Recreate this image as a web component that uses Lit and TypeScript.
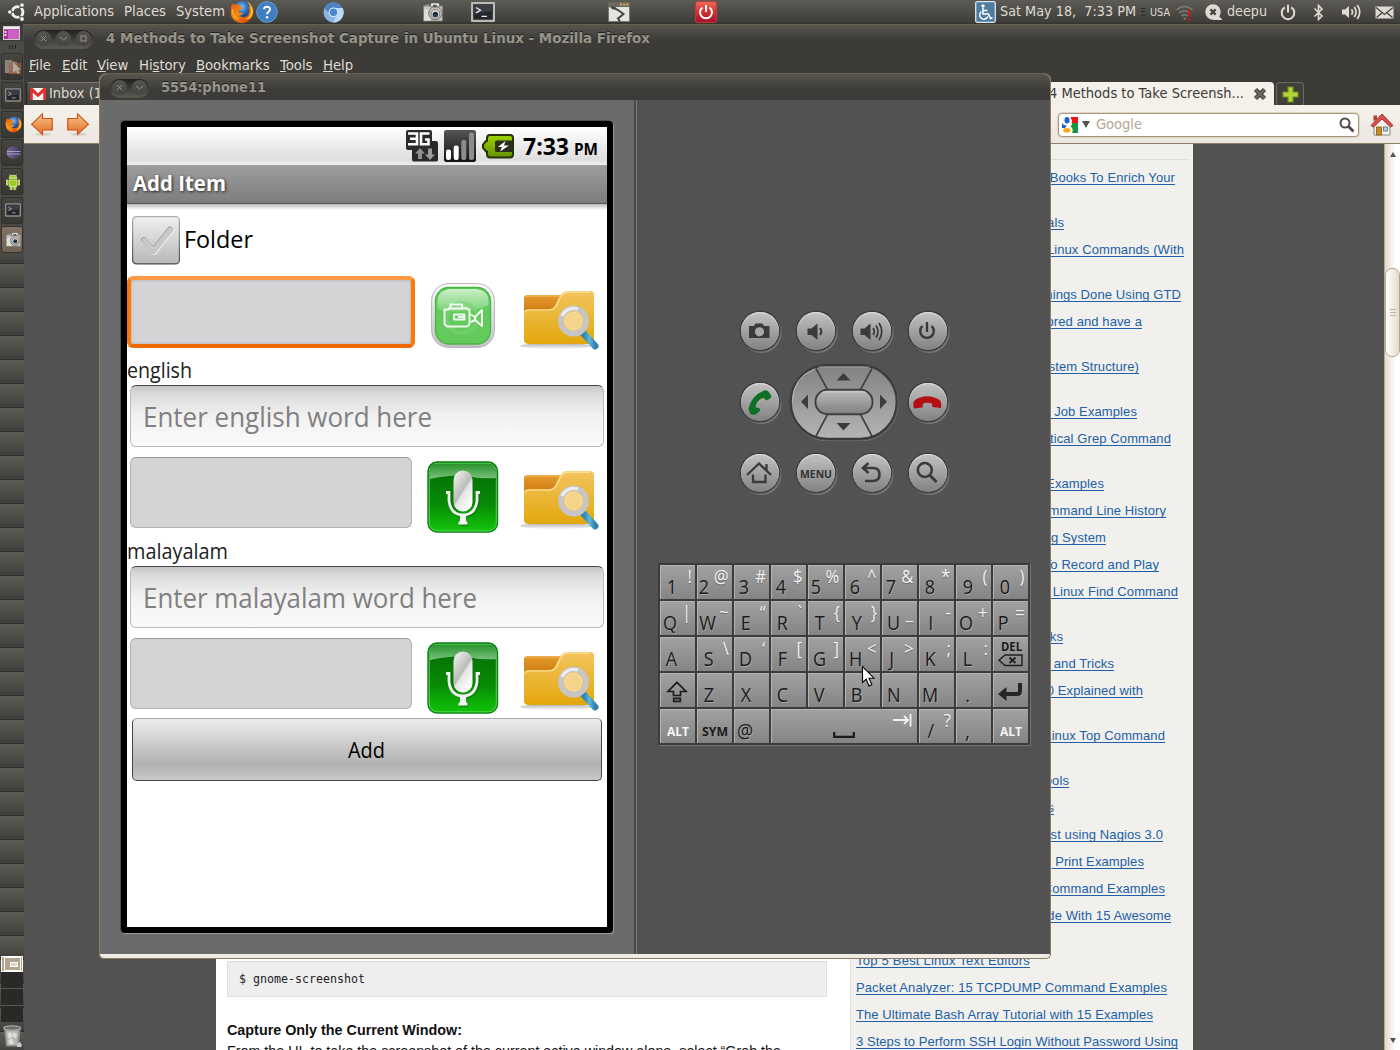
import { LitElement, html, svg, css, nothing } from "lit";
import type { TemplateResult } from "lit";
import { customElement, property } from "lit/decorators.js";

/* ---------- text that is condensed or spaced to a given width ---------- */
@customElement("fit-text")
class FitText extends LitElement {
  @property() text = "";
  @property({ type: Number }) w = 0;
  @property({ reflect: true }) mode = "scale";
  static styles = css`
    :host { display: inline-block; white-space: pre; text-align: left; flex: none; }
    .t { display: inline-block; transform-origin: 0 50%; }
    :host([mode="link"]) .t { text-decoration: underline; text-decoration-thickness: 1px; text-underline-offset: 2px; text-decoration-skip-ink: none; }
  `;
  render() {
    return html`<span class="t">${this.text}</span>`;
  }
  updated() {
    const t = this.renderRoot.querySelector(".t") as HTMLElement;
    if (!this.w) return;
    t.style.letterSpacing = this.mode === "link" ? "0px" : "";
    const natural = t.offsetWidth ? t.getBoundingClientRect().width : 0;
    if (!natural) return;
    this.style.width = this.w + "px";
    if (this.mode === "link") {
      t.style.letterSpacing = (this.w - natural) / this.text.length + "px";
    } else {
      t.style.transform = `scaleX(${this.w / natural})`;
    }
  }
}
const fit = (text: string, w: number, mode = "scale") =>
  html`<fit-text .text=${text} .w=${w} .mode=${mode}></fit-text>`;

/* ---------- icons ---------- */
const icon = (w: number, h: number, body: unknown, vb = `0 0 ${w} ${h}`) =>
  html`<svg width=${w} height=${h} viewBox=${vb} fill="none" style="display:block;flex:none">${body}</svg>`;

const ubuntu = icon(18, 18, svg`
  <circle cx="9.6" cy="9" r="5.3" stroke="#f2f0ea" stroke-width="3"/>
  <path d="M9.6 9L2 9M9.6 9L14 1.5M9.6 9L14 16.5" stroke="#4c4b47" stroke-width="1.4"/>
  <circle cx="9.6" cy="9" r="3.6" fill="#4c4b47"/>
  <circle cx="1.9" cy="9" r="2.5" fill="#4c4b47"/><circle cx="13.9" cy="2.2" r="2.7" fill="#4c4b47"/><circle cx="13.9" cy="15.9" r="2.7" fill="#4c4b47"/>
  <circle cx="1.8" cy="9" r="1.8" fill="#f2f0ea"/><circle cx="14" cy="2.1" r="1.9" fill="#f2f0ea"/><circle cx="14" cy="16" r="1.9" fill="#f2f0ea"/>`);

const firefox = (s: number) => icon(s, s, svg`
  <defs>
    <radialGradient id="fb" cx=".45" cy=".3" r=".7"><stop offset="0" stop-color="#7fc4ee"/><stop offset=".5" stop-color="#2263b4"/><stop offset="1" stop-color="#0b1f5e"/></radialGradient>
    <linearGradient id="fo" x1="0" y1="0" x2=".8" y2="1"><stop offset="0" stop-color="#e2520c"/><stop offset=".5" stop-color="#f58a17"/><stop offset="1" stop-color="#d43f06"/></linearGradient>
  </defs>
  <circle cx="12.5" cy="11" r="10" fill="url(#fb)"/>
  <path d="M2.5 3C3.500 4 4 4.500 5 4.600C7 4 8.500 4.300 9.500 5.500L12 7.500C12.500 9 11 9.500 9.500 10C9 11.500 8.500 11.500 9 12.500C10 13 11.500 12.500 13 13C13 14.500 11 15.800 9.500 15.500C12 18 16 17.500 18 15C20 12 19.500 8 18 6L20.500 7.500C20 5 18.500 3 16.500 1.500C21 3 23.800 7.500 23.400 12.500C22.500 19 17.500 23.200 12 23.200C5.500 23 1 18.500 .8 12.500C.6 9 1.200 6 2.500 3Z" fill="url(#fo)"/>
  <path d="M20.500 7.500C22 12 20 18 14.500 19.500C20 20 23 16 22.900 11.500C22.600 7 20 3.500 16.500 1.500C18.500 3 20 5 20.500 7.500Z" fill="#fbc92e"/>
  <path d="M2.500 9C2 13 4.500 18 9 19.500" stroke="#fbb429" stroke-width="1.300"/>`, "0 0 24 24");

const help = icon(22, 22, svg`
  <circle cx="11" cy="11" r="10.300" fill="#3f7fc0" stroke="#6aa0d4" stroke-width="1"/>
  <path d="M8 8.300C8.100 4.900 14 4.800 14 8.300C14 10.800 11.100 10.600 11.100 13.300" stroke="#fff" stroke-width="1.900"/>
  <circle cx="11.100" cy="16.200" r="1.200" fill="#fff"/>`);

const chromium = icon(21, 21, svg`
  <circle cx="10.500" cy="10.500" r="10" fill="#8ab4e4"/>
  <path d="M1.500 6A10 10 0 0 1 19.600 6H10.500L7 12Z" fill="#4f83bf"/>
  <path d="M19.600 6A10 10 0 0 1 10 20.500L14.500 12.500L13 6Z" fill="#bcd9f5"/>
  <circle cx="10.500" cy="10.300" r="4.900" fill="#dcebfa"/><circle cx="10.500" cy="10.300" r="3.800" fill="#4d86cc"/>`);

const camera = (w: number, h: number) => icon(w, h, svg`
  <path d="M1 4H21V20H1Z" fill="#c9c9c6" stroke="#73726e" stroke-width=".8"/>
  <path d="M3 2.500H7V4H3ZM9 1H17L18.500 5H8Z" fill="#e7e7e5" stroke="#5f5e5a" stroke-width=".7"/>
  <path d="M1.500 8H8V19.500H1.500Z" fill="#dedddb"/><circle cx="13.500" cy="11.800" r="7" fill="#c0bfbb" stroke="#72716d"/>
  <circle cx="13.500" cy="12.500" r="4.600" fill="#d9d9d6" stroke="#777"/><circle cx="13.500" cy="13" r="2.800" fill="#272b33"/>
  <rect x="12" y="13.500" width="3" height="2" fill="#1b3f8c"/><rect x="11" y="3" width="4" height="2.500" fill="#555"/>`, "0 0 22 21");

const terminal = (w: number, h: number, dim = false) => icon(w, h, svg`
  <rect x="1" y="1" width="22" height="18" rx="1" fill="#23262a" stroke=${dim ? "#8d8c89" : "#b9b9b5"} stroke-width="2.400"/>
  <path d="M2.200 2.200H21.800V9L2.200 12Z" fill="#3a3e44"/>
  <path d="M5 5.500L9.500 8.200L5 10.900M10.500 14.300H16" stroke=${dim ? "#b5b5b2" : "#e8e8e6"} stroke-width="1.300"/>`, "0 0 24 20");

const torn = icon(22, 20, svg`
  <rect x=".5" y=".5" width="21" height="19" fill="#e4e4e2" stroke="#77766f"/><rect x="0" y="0" width="22" height="5" fill="#6b6962"/>
  <path d="M12 1.500h2v2h-2zM15.200 1.500h2v2h-2zM18.300 1.500h2v2h-2z" fill="#e0ad45"/>
  <path d="M1 4.500H9L5 8Z" fill="#6b6962"/><path d="M4 5L10 8L15.500 12L10 16.500L12 19.500" stroke="#45433e" stroke-width="2"/>`);

const powerRed = icon(22, 22, svg`
  <defs><linearGradient id="pr" x1="0" y1="0" x2="0" y2="1"><stop offset="0" stop-color="#ec6a5c"/><stop offset=".5" stop-color="#d8302f"/><stop offset="1" stop-color="#a1102f"/></linearGradient></defs>
  <rect x=".5" y=".5" width="21" height="21" rx="2" fill="url(#pr)" stroke="#c23a3a"/>
  <path d="M7.500 6.500A6 6 0 1 0 14.500 6.500M11 4V11" stroke="#fff" stroke-width="2"/>`);

const access = icon(21, 22, svg`
  <rect x=".7" y=".7" width="19.600" height="20.600" rx="1.500" fill="#4f7ba3" stroke="#dfe4e8" stroke-width="1.300"/>
  <circle cx="8" cy="5" r="1.700" fill="#fff"/><path d="M8 7V13H13.500L15.500 17.500L17.500 16.800M8 9.500H12.500" stroke="#fff" stroke-width="1.500"/>
  <path d="M6.500 10.500A4.200 4.200 0 1 0 12.800 15.500" stroke="#fff" stroke-width="1.500"/>`);

const wifi = icon(18, 20, svg`
  <path d="M.8 8C5 3.500 12.500 3.500 16.500 8M3 11.200C6 8 11 8 14 11.200M5.500 14.200C7 12.200 10 12.200 11.500 14.200" stroke="#7b7972" stroke-width="1.700"/>
  <path d="M6.800 15.800L8.700 18.300L10.500 15.800Z" fill="#7b7972"/><path d="M12.300 7.500h2v7.500h-2zM12.300 16.700h2v2.300h-2z" fill="#e01212"/>`);

const bubble = icon(18, 17, svg`
  <circle cx="8" cy="8" r="7.700" fill="#dfdbd2"/><path d="M10 13.500L13 11L17.500 16H8Z" fill="#dfdbd2"/>
  <path d="M5.400 5.400L10.600 10.600M10.600 5.400L5.400 10.600" stroke="#45443f" stroke-width="2.200"/>`);

const powerPanel = icon(16, 17, svg`<path d="M4.800 3.400A6.300 6.300 0 1 0 11.200 3.400M8 .8V8.500" stroke="#dfdbd2" stroke-width="2"/>`);
const bluetooth = icon(11, 17, svg`<path d="M1.500 4.500L9 12L5.500 15.500V1.500L9 5L1.500 12.500" stroke="#dfdbd2" stroke-width="1.600"/>`);
const speaker = icon(22, 18, svg`
  <path d="M1 6.500H4L8 3V15L4 11.500H1Z" fill="#dfdbd2"/>
  <path d="M10.500 6.200Q12.500 9 10.500 11.800M13.300 4Q16.800 9 13.300 14M16.300 2Q21.200 9 16.300 16" stroke="#dfdbd2" stroke-width="1.700"/>`);
const mail = icon(19, 13, svg`
  <rect x=".5" y=".5" width="18" height="12" fill="#dfdbd2"/><path d="M1 1.500L9.500 8.500L18 1.500M1.500 11.500L7 6.800M17.500 11.500L12 6.800" stroke="#45443f" stroke-width="1.300"/>`);

/* dock */
const purple = icon(17, 14, svg`
  <rect x=".5" y=".5" width="16" height="13" fill="#a8309b" stroke="#cfc9c9"/><rect x="1" y="1" width="15" height="2.200" fill="#f0eeea"/>
  <path d="M1.500 5h2v2h-2zM1.500 8h2v2h-2z" fill="#f3d6f0"/><rect x="5" y="4" width="11" height="9" fill="#cc5fc3"/>`);
const files = icon(18, 16, svg`
  <path d="M1 1H8V3H13V14H1Z" fill="#8a8782"/><path d="M5 4H17V15H5Z" fill="#9a5c3e" opacity=".8"/><path d="M3 2H11V12H3Z" fill="#8f7566" opacity=".6"/>
  <path d="M9 3V14L12 11.500L13.500 15L15.500 14L14 10.800H17Z" fill="#adaaa4"/>`);
const eclipse = icon(15, 13, svg`
  <defs><linearGradient id="ec"><stop offset="0" stop-color="#7b6a9b"/><stop offset="1" stop-color="#39355e"/></linearGradient></defs>
  <ellipse cx="7.500" cy="6.500" rx="7" ry="6.200" fill="url(#ec)"/><path d="M1 5.500H14.500M1 8H14.500" stroke="#b9b2cc" stroke-width=".8"/>`);
const android = icon(14, 16, svg`
  <path d="M3 5A4 4 0 0 1 11 5ZM3 6H11V12.500H3ZM.3 6H2V11H.3ZM12 6H13.700V11H12ZM4.200 12H6.200V15.500H4.200ZM7.800 12H9.800V15.500H7.800Z" fill="#9ccb20" stroke="#dff0a8" stroke-width=".7"/>
  <path d="M4.500 2L3.500 .5M9.500 2L10.500 .5" stroke="#cfe88a"/><path d="M5 3.200h1v1h-1zM8 3.200h1v1h-1z" fill="#fff"/>`);
const trash = icon(20, 23, svg`
  <path d="M2 3L4 21.500H17L18.500 3Z" fill="#8f908e"/><path d="M4 6L5.500 20H15L16.500 6Z" fill="#b5b7b3"/>
  <ellipse cx="10.200" cy="3" rx="8.800" ry="2.200" fill="#6d6e6c" stroke="#b9bab8"/>
  <path d="M5 9L9 7L11 11L7 14ZM11 7L15 9L14 13L11 12ZM6 16L10 13L12 18L8 20Z" fill="#dcdedb"/><path d="M15 19L18 17L20 20L19 22H15Z" fill="#c9cbc8"/>`);

/* firefox */
const gmail = icon(16, 12, svg`
  <rect width="16" height="12" fill="#dd3030"/><path d="M2.800 12V4.800L8 9.300L13.200 4.800V12Z" fill="#fff"/><path d="M2.600 0H13.400L8 5.300Z" fill="#fff"/>
  <path d="M3.500 11.500L6.500 8.500M12.500 11.500L9.500 8.500" stroke="#e9a0a0" stroke-width=".7"/>`);
const arrow = (flip: boolean) => icon(24, 26, svg`
  <defs><linearGradient id="ar" x1="0" y1="0" x2="0" y2="1"><stop offset="0" stop-color="#f6c888"/><stop offset="1" stop-color="#e26a23"/></linearGradient></defs>
  <ellipse cx="13" cy="22.300" rx="8" ry="1.600" fill="#d8d1c8"/>
  <path transform=${flip ? "translate(24 0) scale(-1 1)" : ""} d="M1.500 12.300L12.500 1.800V6.500H22.300V18H12.500V22.600Z" fill="url(#ar)" stroke="#c9501c" stroke-width="1.100"/>`);
const tabX = icon(14, 14, svg`<path d="M2.500 2.500L11.500 11.500M11.500 2.500L2.500 11.500" stroke="#3f3e3a" stroke-width="4.400"/><path d="M2.500 2.500L11.500 11.500M11.500 2.500L2.500 11.500" stroke="#6d6b65" stroke-width="2.400"/>`);
const plus = icon(17, 17, svg`<path d="M6 1H11V6H16V11H11V16H6V11H1V6H6Z" fill="#b4d43c" stroke="#6e9418" stroke-width="1.200"/>`);
const google = icon(16, 16, svg`
  <rect width="16" height="16" fill="#fff"/><path d="M9 0H16V6H9.500Q11 3 8.500 1.500Z" fill="#f4130f"/><path d="M10 6H16V16H10Q12 12 8.500 9.500Q10.500 8 10 6Z" fill="#16963c"/>
  <ellipse cx="5" cy="3.300" rx="2.500" ry="3.200" fill="#1e5bd6"/><path d="M0 6Q2 9 5 8.500L3 11H0Z" fill="#1e5bd6"/><ellipse cx="4.800" cy="13.300" rx="3.500" ry="2.300" fill="#f6a80c"/>`);
const magnify = icon(16, 16, svg`<circle cx="6" cy="6" r="4.500" stroke="#4b4a48" stroke-width="2"/><path d="M9.300 9.300L14.500 14.500" stroke="#4b4a48" stroke-width="2.800"/>`);
const home = icon(24, 25, svg`
  <path d="M4 12V23H20V12L12 5Z" fill="#f3f1ee" stroke="#8c8984"/><path d="M3.500 9V3.500H7V7Z" fill="#b9352f"/>
  <path d="M1 13.500L12 2L23 13.500L20.500 15L12 7L3.500 15Z" fill="#d65050" stroke="#9c2727" stroke-width=".9"/>
  <rect x="6.500" y="15" width="5" height="8" fill="#c58a22" stroke="#8a5c10" stroke-width=".8"/><rect x="13.500" y="15" width="4" height="4" fill="#b7cfe6" stroke="#666" stroke-width=".8"/>`);

/* phone */
const threeG = icon(32, 32, svg`
  <path d="M2 0H24Q26 0 26 2V11H30Q32 11 32 13V30Q32 31.500 30 31.500H8Q6 31.500 6 30V20H2Q0 20 0 18V2Q0 0 2 0Z" fill="#2a2a2a"/>
  <path d="M2 3.500H11V14.200H2M4 8.800H11M23.500 3.500H15V14.200H22.500V9.500H19" stroke="#fff" stroke-width="2.600"/>
  <path d="M14 18L19 23.500H16V29H12V23.500H9Z" fill="#8f8f8f"/><path d="M24 30L29 24.500H26V18.500H22V24.500H19Z" fill="#9a9a9a"/>`);
const signal = icon(32, 32, svg`
  <defs><linearGradient id="sg" x1="0" y1="0" x2="0" y2="1"><stop offset="0" stop-color="#555"/><stop offset="1" stop-color="#111"/></linearGradient></defs>
  <rect width="32" height="32" rx="2.500" fill="url(#sg)"/>
  <rect x="2" y="19.500" width="5" height="10.500" rx="2" fill="#fff"/><rect x="9.700" y="15.500" width="5" height="14.500" rx="2" fill="#fff"/>
  <rect x="17.300" y="10" width="5" height="20" rx="2" fill="#8c8c8c"/><rect x="25" y="2.500" width="5" height="27.500" rx="2" fill="#8c8c8c"/>`);
const battery = icon(33, 25, svg`
  <defs><linearGradient id="bt" x1="0" y1="0" x2="0" y2="1"><stop offset="0" stop-color="#9bd400"/><stop offset="1" stop-color="#659200"/></linearGradient></defs>
  <path d="M8 1H28Q31 1 31 4V20Q31 23.500 28 23.500H8Q5 23.500 5 20V17.500H4L1 14V10.500L4 7H5V4Q5 1 8 1Z" fill="url(#bt)" stroke="#26300c" stroke-width="2"/>
  <path d="M13 8Q13 6.500 15 6.500H30V18H15Q13 18 13 16.500Z" fill="#2a2f20"/><path d="M23.500 7L16 13H20L18 17.500L27 11.500H22Z" fill="#fff"/>`);
const checkbox = icon(48, 49, svg`
  <defs><linearGradient id="cb" x1="0" y1="0" x2="0" y2="1"><stop offset="0" stop-color="#efefef"/><stop offset="1" stop-color="#b8b8b8"/></linearGradient>
  <linearGradient id="cs" x1="0" y1="0" x2="0" y2="1"><stop offset="0" stop-color="#b0b0b0"/><stop offset="1" stop-color="#4a4a4a"/></linearGradient></defs>
  <rect x=".6" y=".6" width="46.800" height="47.300" rx="4" fill="url(#cb)" stroke="url(#cs)" stroke-width="1.200"/>
  <path d="M12 24L21.500 34.500L38 13.500" stroke="#ececec" stroke-width="6.500" stroke-linecap="round" stroke-linejoin="round" transform="translate(.8 1)"/>
  <path d="M12 24L21.500 34.500L38 13.500" stroke="#a4a4a4" stroke-width="6" stroke-linecap="round" stroke-linejoin="round"/>
  <path d="M12 24L21.500 34.500L38 13.500" stroke="#c8c8c8" stroke-width="5" stroke-linecap="round" stroke-linejoin="round" transform="translate(.3 .4)"/>`);
const video = icon(64, 65, svg`
  <defs><linearGradient id="vf" x1="0" y1="0" x2="0" y2="1"><stop offset="0" stop-color="#fbfbfb"/><stop offset="1" stop-color="#c4bfc4"/></linearGradient>
  <linearGradient id="vg" x1="0" y1="0" x2="0" y2="1"><stop offset="0" stop-color="#c9efc6"/><stop offset="1" stop-color="#7bd275"/></linearGradient></defs>
  <rect x=".6" y=".6" width="62.800" height="63.800" rx="17" fill="url(#vf)" stroke="#b9b5b9"/>
  <rect x="4.500" y="4.500" width="55" height="56.500" rx="13.500" fill="#62cb5c" stroke="#45b845" stroke-width="1.300"/>
  <path d="M6.500 26V18Q7 7 19 6H45Q57 7 57.500 18V22Q48 27 38 27Q22 31 6.500 26Z" fill="url(#vg)"/>
  <circle cx="31" cy="35" r="15" stroke="#7ad075" stroke-width="4" opacity=".6"/>
  <path d="M13.500 26.500H17L19.500 25.200V21.500H31V25.200H35L38.500 27V41.500L36 43.500H16L13.500 41ZM17 25.500H36M40 31.500L44 34L51 27V43L44 37L40 39M44 34V37M23 31.500H33.500V36.500H23ZM27 34H33" stroke="#f1faf0" stroke-width="2" stroke-linejoin="round"/>`);
const mic = icon(72, 73, svg`
  <defs><linearGradient id="mg" x1="0" y1="0" x2="0" y2="1"><stop offset="0" stop-color="#066a06"/><stop offset=".6" stop-color="#078a05"/><stop offset="1" stop-color="#12c50a"/></linearGradient>
  <linearGradient id="mh" x1="0" y1="0" x2="0" y2="1"><stop offset="0" stop-color="#2a942e"/><stop offset="1" stop-color="#7ac27d"/></linearGradient>
  <linearGradient id="mw" x1="0" y1="0" x2=".7" y2="1"><stop offset="0" stop-color="#f8f8f8"/><stop offset=".55" stop-color="#b9bdb9"/><stop offset=".62" stop-color="#e5e5e5"/><stop offset="1" stop-color="#fff"/></linearGradient></defs>
  <rect x="1" y="1" width="69.500" height="70" rx="9" fill="url(#mg)" stroke="#0d8014" stroke-width="1.400"/>
  <rect x="2.300" y="2.300" width="67" height="67.500" rx="8" stroke="#5fdd5a" stroke-width=".9"/>
  <path d="M3 18V10Q3 3 10 3H62Q69 3 69 10V17Q52 18 36 14.500Q20 14 3 18Z" fill="url(#mh)"/>
  <rect x="26.500" y="9.500" width="19" height="41" rx="9.500" fill="url(#mw)"/>
  <path d="M19.500 30.500H22.500V39Q24 53 36 53Q48 53 49.500 39V30.500H52.500M36 53V62M31.500 61.500H40.500" stroke="#0a5a0a" stroke-width="4.500" opacity=".4" transform="translate(1 1.500)"/>
  <path d="M19 31.500H22V40Q24 54 36 54Q48 54 50 40V31.500H53" stroke="#eef0ee" stroke-width="2.800"/>
  <path d="M33 54H39V59Q39 61 40.500 61V63.500H31.500V61Q33 61 33 59Z" fill="#f4f4f4"/>`);
const folder = icon(80, 62, svg`
  <defs><linearGradient id="ff" x1="0" y1="0" x2="0" y2="1"><stop offset="0" stop-color="#f3c45e"/><stop offset="1" stop-color="#e3a70c"/></linearGradient>
  <linearGradient id="fk" x1="0" y1="0" x2="0" y2="1"><stop offset="0" stop-color="#e69b2c"/><stop offset="1" stop-color="#c46c06"/></linearGradient>
  <linearGradient id="fh" x1="0" y1="0" x2="1" y2="0"><stop offset="0" stop-color="#2d86ad"/><stop offset=".5" stop-color="#5fb4d8"/><stop offset="1" stop-color="#2f83ae"/></linearGradient>
  <linearGradient id="fs" x1="0" y1="0" x2="0" y2="1"><stop offset="0" stop-color="#999" stop-opacity=".9"/><stop offset="1" stop-color="#ccc" stop-opacity=".2"/></linearGradient></defs>
  <ellipse cx="36" cy="56" rx="36" ry="3" fill="url(#fs)"/>
  <path d="M4 8Q4 5 8 5H40L50 9V30H4Z" fill="url(#fk)"/><path d="M6 7Q6.500 6 9 6H40" stroke="#f3bd6a"/>
  <path d="M4 22.500Q4 19 8 19H29C39 19 36 1 48 1H70Q74 1 74 5V50Q74 54 70 54H9Q4 54 4 50Z" fill="url(#ff)"/>
  <path d="M5 22.500Q5.500 20 9 20H29.500C40 20 37 2.200 48 2.200H70" stroke="#fbe3a4" stroke-width="1.200"/>
  <path d="M64 44L75 56" stroke="url(#fh)" stroke-width="7" stroke-linecap="round"/>
  <circle cx="53.500" cy="31" r="12.700" fill="#f3c768" stroke="#c6c6c8" stroke-width="5.400"/>
  <circle cx="53.500" cy="31" r="8.500" fill="#f4d38a" stroke="#f8e2ab"/><path d="M42 26A12.700 12.700 0 0 1 58 19" stroke="#ecedee" stroke-width="3"/>`);

/* hardware buttons, drawn on a 38px disc */
const dk = "#3a3a3a";
const hw: Record<string, TemplateResult> = {
  cam: icon(38, 38, svg`<path d="M9 14H14L15.500 11.500H22.500L24 14H29.500V26H9Z" fill="${dk}"/><circle cx="19.500" cy="19.800" r="4.600" fill="#a8a8a8"/>`),
  vol1: icon(38, 38, svg`<path d="M11.500 16.500H15.500L21.500 11.500V28L15.500 23H11.500Z" fill="${dk}"/><path d="M24 16Q26.500 19.500 24 23" stroke="${dk}" stroke-width="2"/>`),
  vol2: icon(38, 38, svg`<path d="M8.500 16.500H12.500L18.500 11.500V28L12.500 23H8.500Z" fill="${dk}"/><path d="M21 16Q23.500 19.500 21 23M24 13.500Q28 19.500 24 25.500M27 11Q32.500 19.500 27 28" stroke="${dk}" stroke-width="1.800"/>`),
  pow: icon(38, 38, svg`<path d="M14.500 14A6.800 6.800 0 1 0 23.500 14M19 10V20" stroke="${dk}" stroke-width="2.400"/>`),
  call: icon(38, 38, svg`<path d="M8.500 26Q11 13 24 7.500Q26 7 28 8L31.500 13Q31 15 29.500 16L26 17.500L23.500 14.800Q16 17.500 15.500 24.500L19 25Q20.500 26 20 28L15.500 31.500Q12 32.500 10 30.500Z" fill="#0d7027"/>`),
  end: icon(38, 38, svg`<path d="M5.500 24Q4.500 19 7 17Q19 9.500 31.500 17Q34 19 33 25L24.500 24L24 20.500Q19 19 15 20.500L14.500 24.500L6 25.500Z" fill="#b30f14"/>`),
  home: icon(38, 38, svg`<path d="M7 21L19 9.500L31 21M13 20.500V28H25.500V20.500M26.500 10V17" stroke="${dk}" stroke-width="2.300"/>`),
  back: icon(38, 38, svg`<path d="M16.500 9L11 14L16.500 19M11.500 14H21Q27.500 14 27.500 20.500Q27.500 27 21 27H13" stroke="${dk}" stroke-width="2.600"/>`),
  find: icon(38, 38, svg`<circle cx="16.800" cy="16" r="7" stroke="${dk}" stroke-width="2.500"/><path d="M22 21.500L28.500 28" stroke="${dk}" stroke-width="3"/>`),
};
const dpad = icon(110, 78, svg`
  <defs><linearGradient id="dp" x1="0" y1="0" x2="0" y2="1"><stop offset="0" stop-color="#818181"/><stop offset="1" stop-color="#b5b5b5"/></linearGradient>
  <linearGradient id="dc" x1="0" y1="0" x2="0" y2="1"><stop offset="0" stop-color="#bcbcbc"/><stop offset="1" stop-color="#808080"/></linearGradient></defs>
  <rect x="2" y="3" width="107" height="75" rx="37" stroke="#707070"/>
  <rect x="1.700" y="2.200" width="106" height="73.600" rx="36.500" fill="url(#dp)" stroke="#3b3b3b" stroke-width="2.200"/>
  <path d="M30 4H80" stroke="#aaa" stroke-width="1" opacity=".8"/><path d="M3.500 38.500Q4 14 25 6.500" stroke="#bdbdbd"/>
  <path d="M27 5.500L39 27.500M83 5.500L71 27.500M27 73L39 50.500M83 73L71 50.500" stroke="#404040" stroke-width="1.600"/>
  <rect x="26.500" y="26.700" width="57" height="24.500" rx="12" fill="url(#dc)" stroke="#404040" stroke-width="1.900"/>
  <path d="M34 28.900H76" stroke="#d5d5d5"/>
  <path d="M47.500 17.500L54.500 10L61.500 17.500ZM47.500 60L54.500 67.500L61.500 60ZM19 31.500V46L12 38.700ZM91 31.500V46L98 38.700Z" fill="#3c3c3c"/>`);
const shiftKey = icon(22, 22, svg`<path d="M11 1.300L20 10.500H14.500V14.500H7.500V10.500H2ZM7.700 17.300H14.300V20.300H7.700Z" stroke="#1c1c1c" stroke-width="1.700"/>`);
const delKey = icon(25, 13, svg`<path d="M7 1H24V11.500H7L1 6.300Z" stroke="#1f1f1f" stroke-width="1.400"/><path d="M11.500 3.500L17.500 9M17.500 3.500L11.500 9" stroke="#1f1f1f" stroke-width="1.800"/>`);
const enterKey = icon(26, 20, svg`<path d="M23 1V9Q23 12 20 12H8" stroke="#262626" stroke-width="4"/><path d="M1 12L9.500 5V19Z" fill="#262626"/>`);
const spaceKey = icon(22, 7, svg`<path d="M1.200 0V4.800H20.800V0" stroke="#1c1c1c" stroke-width="2.200"/>`);
const tabKey = icon(19, 14, svg`<path d="M0 7H15M11 3L15 7L11 11M17.500 1V13.500" stroke="#f2f2f2" stroke-width="1.800"/>`);

type Key = { m?: string; s?: string; k?: string; i?: TemplateResult };
const row = (a: string, b: string[]): Key[] => [...a].map((m, i) => ({ m, s: b[i] }));
const keys: Key[] = [
  ...row("1234567890", ["!", "@", "#", "$", "%", "^", "&", "*", "(", ")"]),
  ...row("QWERTYUIOP", ["|", "~", "“", "`", "{", "}", "_", "-", "+", "="]),
  ...row("ASDFGHJKL", ["", "\\", "‘", "[", "]", "<", ">", ";", ":"]),
  { k: "del", i: delKey },
  { k: "mid", i: shiftKey },
  ...row("ZXCVBNM.", []),
  { k: "mid", i: enterKey },
  { k: "alt light", m: "ALT" }, { k: "alt", m: "SYM" }, { m: "@" },
  { k: "space", i: spaceKey },
  { m: "/", s: "?" }, { m: "," },
  { k: "alt light", m: "ALT" },
];

/* sidebar links: text, right edge, number of lines the entry takes, full width where known */
const links: [string, number, number, number?][] = [
  ["Books To Enrich Your", 1175, 2], ["als", 1064, 1], ["Linux Commands (With", 1184, 2], ["hings Done Using GTD", 1181, 1],
  ["ored and have a", 1142, 2], ["stem Structure)", 1139, 2], ["\u00a0Job Examples", 1137, 1], ["ctical Grep Command", 1171, 2],
  ["Examples", 1104, 1], ["mmand Line History", 1166, 1], ["g System", 1106, 1], ["To Record and Play", 1159, 1],
  ["\u00a0Linux Find Command", 1178, 2], ["ks", 1063, 1], ["\u00a0and Tricks", 1114, 1], ["0 Explained with", 1143, 2],
  ["Linux Top Command", 1165, 2], ["ools", 1069, 1], ["s", 1054, 1], ["st using Nagios 3.0", 1163, 1],
  ["\u00a0Print Examples", 1144, 1], ["Command Examples", 1165, 1], ["de With 15 Awesome", 1171, 2],
  ["Top 5 Best Linux Text Editors", 1030, 1, 174], ["Packet Analyzer: 15 TCPDUMP Command Examples", 1167, 1, 311],
  ["The Ultimate Bash Array Tutorial with 15 Examples", 1153, 1, 297], ["3 Steps to Perform SSH Login Without Password Using", 1178, 1, 322],
];

/* ---------- top panel ---------- */
@customElement("top-panel")
class TopPanel extends LitElement {
  static styles = css`
    :host { display: grid; height: 24px; box-sizing: border-box; padding-left: 8px; align-items: center;
      grid-template-columns: 26px 90px 52px 54px 26px 67px 99px 49px 137px 87px 280px 25px 141px 9px 26px 29px 22px 53px 33px 28px 34px 25px;
      background: linear-gradient(#5c5b56, #3f3e3a 90%, #33322e); color: #dfdbd2; font: 13.3px/22px "DejaVu Sans", sans-serif; }
    .small { font-size: 11px; padding-top: 1px; }
    .grip { width: 4px; height: 9px; background: repeating-linear-gradient(#2b2a27 0 1px, transparent 1px 3.5px); }
  `;
  render() {
    return html`
      ${ubuntu}${fit("Applications", 80)}${fit("Places", 42)}${fit("System", 49)}
      ${firefox(24)}${help}${chromium}${camera(22, 20)}${terminal(24, 20)}${torn}${powerRed}
      ${access}${fit("Sat May 18,  7:33 PM", 136)}<div class="grip"></div>
      <span class="small">${fit("USA", 20)}</span>${wifi}${bubble}${fit("deepu", 40)}${powerPanel}${bluetooth}${speaker}${mail}`;
  }
}

/* ---------- left dock ---------- */
@customElement("side-dock")
class SideDock extends LitElement {
  static styles = css`
    :host { display: flex; flex-direction: column; width: 24px; height: 1026px; flex: none;
      background: repeating-linear-gradient(#5c5b56 0, #3f3e3a 22.500px, #2f2e2b 23px, #2f2e2b 24px); }
    .first { height: 17px; margin: 0 1px 0 0; display: flex; align-items: center; justify-content: center; background: #3b3a36; border-radius: 0 0 3px 3px; }
    .grip { height: 12px; display: flex; align-items: center; justify-content: center; background: #4b4a46; }
    .grip i { width: 7px; height: 4px; background: repeating-linear-gradient(90deg, #22211f 0 1px, transparent 1px 3px); }
    .btns { display: flex; flex-direction: column; gap: 1.800px; background: #4a4945; padding-bottom: 1px; }
    .b { height: 27px; width: 22px; margin-left: 1px; border-radius: 3px; background: linear-gradient(#464540, #373632);
      box-shadow: inset 0 0 0 1px #32312e; display: flex; align-items: center; justify-content: center; padding-left: 2px; box-sizing: border-box; }
    .b.on { background: linear-gradient(#857463, #6f6051); }
    .gap { flex: 1; }
    .ws { margin-left: 1px; width: 22px; background: #2a2927; }
    .w { height: 16px; border-bottom: 1px solid #5a5955; }
    .w:last-child { border: 0; }
    .w.on { height: 14px; border: 1px solid #fff; background: #b3a48d; display: flex; align-items: center; justify-content: center; }
    .w.on i { width: 17px; height: 14px; border: 1px solid #fff; box-sizing: border-box; display: flex; align-items: center; justify-content: center; padding-left: 3px; }
    .w.on b { width: 6px; height: 3px; border: 1px solid #fff; background: #ddd5c8; }
    .tr { height: 28px; display: flex; align-items: center; justify-content: center; }
  `;
  render() {
    const b = [files, terminal(16, 14, true), firefox(17), eclipse, android, terminal(16, 14, true), camera(17, 15)];
    return html`<div class="first">${purple}</div><div class="grip"><i></i></div>
      <div class="btns">${b.map((i, n) => html`<div class="b ${n === 6 ? "on" : ""}">${i}</div>`)}</div>
      <div class="gap"></div>
      <div class="ws"><div class="w on"><i><b></b></i></div><div class="w"></div><div class="w"></div><div class="w"></div></div>
      <div class="tr">${trash}</div>`;
  }
}

const pillCss = css`
  .pill { display: flex; align-items: center; gap: 5px; height: 18px; border-radius: 9px; padding: 0 2px; box-sizing: border-box;
    background: linear-gradient(#22211f, #5a5954); box-shadow: 0 1px 0 #55544f; }
  .pill i { width: 15px; height: 15px; border-radius: 50%; background: linear-gradient(#55544f, #45443f); }
`;
const knobs = [
  icon(15, 15, svg`<path d="M5 5L10 10M10 5L5 10" stroke="#96938a" stroke-width="1"/>`),
  icon(15, 15, svg`<path d="M4 6L7.500 9L11 6" stroke="#96938a" stroke-width="1"/>`),
  icon(15, 15, svg`<rect x="5" y="5" width="5" height="5" stroke="#96938a"/>`),
];
const pill = (n: number) => html`<div class="pill">${knobs.slice(0, n).map((k) => html`<i>${k}</i>`)}</div>`;

/* ---------- browser window ---------- */
@customElement("browser-window")
class BrowserWindow extends LitElement {
  static styles = [pillCss, css`
    :host { display: flex; flex-direction: column; width: 1376px; height: 1026px; background: #3c3b37; color: #dfdbd2; font: 13.300px/18px "DejaVu Sans", sans-serif; }
    .title { height: 26px; display: flex; align-items: center; gap: 13px; padding: 2px 0 0 10px; box-sizing: border-box; border-top: 1px solid #6a604f;
      background: linear-gradient(#56554f, #3c3b37 60%); font-weight: bold; color: #97948a; text-shadow: 0 -1px #22211f; }
    .menu { height: 32px; padding: 7px 0 0 5px; box-sizing: border-box; display: grid; grid-template-columns: 33px 35px 42px 57px 84px 43px 40px; }
    .m { height: 18px; white-space: pre; letter-spacing: -.08px; }
    .tabs { height: 23px; display: flex; align-items: stretch; }
    .tab { box-sizing: border-box; display: flex; align-items: center; border-radius: 4px 4px 0 0; }
    .inbox { margin-left: 2px; width: 300px; padding-left: 3px; gap: 3px; background: linear-gradient(#56554f, #403f3b); border: 1px solid #24231f; border-top-color: #77756d; border-bottom: 0; }
    .grow { flex: 1; }
    .active { width: 330px; justify-content: flex-end; padding-right: 7px; gap: 9px; background: #f4f1eb; color: #3c3b37; }
    .new { margin: 0 96px 0 2px; width: 28px; justify-content: center; border: 1px solid #6b6a64; border-bottom: 0; background: #403f3b; }
    .bar { height: 39px; box-sizing: border-box; display: flex; align-items: center; padding: 1px 6px 0 6px; background: linear-gradient(#f5f2ec, #ebe6df); border-bottom: 1px solid #8d8069; }
    .bar .arr { margin-right: 12px; }
    .search { width: 301px; height: 24px; box-sizing: border-box; border: 1.500px solid #a59779; border-radius: 4px; background: #fff; display: flex; align-items: center; padding: 0 3px; margin-right: 11px; color: #b5a78f; box-shadow: 0 0 0 1px #ddd5c5; }
    .tri { width: 0; height: 0; border: 4px solid transparent; border-top: 7px solid #55534e; border-bottom: 0; margin: 0 6px 0 4px; }
    .view { flex: 1; min-height: 0; overflow: hidden; display: flex; background: #525252; padding-left: 192px; font-family: "Liberation Sans", sans-serif; color: #111; }
    .main { width: 634px; background: #fff; box-sizing: border-box; padding: 817px 0 0 11px; }
    .pre { width: 600px; height: 36px; box-sizing: border-box; border: 1px solid #ddd; background: #eee; padding: 8px 11px; font: 11.700px/18px "DejaVu Sans Mono", monospace; color: #222; }
    .h { font-weight: bold; font-size: 14px; margin-top: 24px; height: 18px; }
    .p { font-size: 14px; margin-top: 3px; }
    .side { width: 343px; box-sizing: border-box; border-left: 1px solid #ddd; background: #f1f0ec; padding: 15px 0 0 5px; }
    .dots { border-top: 1px dotted #ccc; margin-right: 5px; height: 9px; }
    .l { margin-bottom: 9px; font-size: 13px; line-height: 18px; text-align: right; color: #215fa8; white-space: nowrap; letter-spacing: .1px; }
    .two { height: 36px; } .one { height: 18px; }
    .l span { text-decoration: underline; text-decoration-thickness: 1px; text-underline-offset: 2px; text-decoration-skip-ink: none; }
    .blank { flex: 1; }
    .scroll { width: 16px; box-sizing: border-box; border-left: 1px solid #b8a98e; background: linear-gradient(90deg, #e2dacb, #fff 70%); display: flex; flex-direction: column; align-items: center; }
    .up, .dn { width: 0; height: 0; border: 3px solid transparent; }
    .up { border-bottom: 5px solid #55534e; border-top: 0; margin: 8px 0 111px; }
    .dn { border-top: 5px solid #55534e; border-bottom: 0; margin: auto 0 7px; }
    .thumb { width: 15px; height: 89px; box-sizing: border-box; border: 1px solid #b5a68c; border-radius: 7px; background: linear-gradient(90deg, #fff, #e4dccd); display: flex; align-items: center; justify-content: center; }
    .thumb i { width: 6px; height: 7px; background: repeating-linear-gradient(#c0b49d 0 1px, transparent 1px 3px); }
  `];
  render() {
    const m = (a: string, u: string, b: string) => html`<div class="m">${a}<u>${u}</u>${b}</div>`;
    return html`
      <div class="title">${pill(3)}${fit("4 Methods to Take Screenshot Capture in Ubuntu Linux - Mozilla Firefox", 544)}</div>
      <div class="menu">${m("", "F", "ile")}${m("", "E", "dit")}${m("", "V", "iew")}${m("Hi", "s", "tory")}${m("", "B", "ookmarks")}${m("", "T", "ools")}${m("", "H", "elp")}</div>
      <div class="tabs">
        <div class="tab inbox">${gmail}${fit("Inbox (1", 53)}</div><div class="grow"></div>
        <div class="tab active">${fit("4 Methods to Take Screensh...", 195)}${tabX}</div>
        <div class="tab new">${plus}</div>
      </div>
      <div class="bar"><div class="arr">${arrow(false)}</div>${arrow(true)}<div class="grow"></div>
        <div class="search">${google}<i class="tri"></i>${fit("Google", 46)}<div class="grow"></div>${magnify}</div>${home}</div>
      <div class="view">
        <div class="main">
          <div class="pre">${fit("$ gnome-screenshot", 126)}</div>
          <div class="h">${fit("Capture Only the Current Window:", 235)}</div>
          <div class="p">${fit("From the UI, to take the screenshot of the current active window alone, select “Grab the", 554)}</div>
        </div>
        <div class="side"><div class="dots"></div>
          ${links.map(([t, r, n, w]) => html`<div class="l ${n === 2 ? "two" : "one"}" style="padding-right:${1193 - r}px">${w ? fit(t, w, "link") : html`<span>${t}</span>`}</div>`)}
        </div>
        <div class="blank"></div>
        <div class="scroll"><i class="up"></i><div class="thumb"><i></i></div><i class="dn"></i></div>
      </div>`;
  }
}

/* ---------- phone screen ---------- */
@customElement("phone-screen")
class PhoneScreen extends LitElement {
  static styles = css`
    :host { display: block; width: 480px; height: 800px; overflow: hidden; background: #fff; color: #000; font-family: "Open Sans", "Noto Sans", sans-serif; }
    .status { height: 38px; display: flex; align-items: center; justify-content: flex-end; gap: 6px; padding-right: 9px; font-weight: bold; background: linear-gradient(#fff, #dedede 85%, #efefef); }
    .clock { display: flex; align-items: baseline; gap: 5px; margin-left: 2px; font-size: 24px; line-height: 36px; padding-top: 2px; }
    .pm { font-size: 16.500px; }
    .head { height: 39px; box-sizing: border-box; border-bottom: 1px solid #555; padding-left: 6px; color: #fff; font-weight: bold; font-size: 21.500px; line-height: 36px; background: linear-gradient(#9d9d9d, #7d7d7d); text-shadow: 1px 1px 3px #222; }
    .body { height: 723px; background: linear-gradient(#bbb, #fff 6px); padding-top: 12px; box-sizing: border-box; }
    .check { display: flex; gap: 4px; padding-left: 5px; height: 60px; font-size: 24px; line-height: 45px; }
    .row { display: grid; grid-template-columns: 288px 96px 80px; height: 72px; }
    .row > * { justify-self: start; }
    .focus { width: 288px; height: 72px; box-sizing: border-box; border: 4px solid #f57a06; border-color: #ff9a42 #f77b08 #ee6a00; border-radius: 6px; background: #d5d3d6; box-shadow: inset 0 0 3px #a7a7ad; }
    .plain { margin-left: 3px; width: 282px; height: 71px; box-sizing: border-box; border: 1px solid #b3b1b4; border-top-color: #999; border-radius: 6px; background: #d5d3d6; }
    .c2 { padding-left: 16px; } .r1 .c2 { padding-top: 7px; }
    .rn .c2 { padding: 4px 0 0 12px; }
    .c3 { padding: 13px 0 0 9px; }
    .r1 .c3 { padding-top: 14px; }
    .label { height: 37px; font-size: 21.500px; line-height: 43px; color: #222; }
    .input { margin: 0 3px 10px; height: 62px; box-sizing: border-box; border: 1px solid #bcbcbc; border-top: 1.500px solid #444; border-radius: 6px; background: linear-gradient(#c6c6c6, #dcdcdc 15%, #f1f1f1 50%, #fbfbfb); padding-left: 12px; font-size: 27px; line-height: 62px; color: #808080; }
    .add { margin: 8px 5px 0; height: 63px; box-sizing: border-box; border: 1px solid #444; border-top-color: #aaa; border-radius: 5px; background: linear-gradient(#ececec, #bdbdbd 60%, #b2b2b2 75%, #c9c9c9); text-align: center; font-size: 21.500px; line-height: 61px; }
    .add fit-text { margin-right: 1px; }
  `;
  render() {
    const group = (label: string, w: number, hint: string, hintW: number) => html`
      <div class="label">${fit(label, w)}</div>
      <div class="input">${fit(hint, hintW)}</div>
      <div class="row rn"><div class="plain"></div><div class="c2">${mic}</div><div class="c3">${folder}</div></div>`;
    return html`
      <div class="status">${threeG}${signal}${battery}<div class="clock">${fit("7:33", 46)}<span class="pm">${fit("PM", 24)}</span></div></div>
      <div class="head">${fit("Add Item", 93)}</div>
      <div class="body">
        <div class="check">${checkbox}${fit("Folder", 69)}</div>
        <div class="row r1"><div class="focus"></div><div class="c2">${video}</div><div class="c3">${folder}</div></div>
        ${group("english", 65, "Enter english word here", 289)}
        ${group("malayalam", 101, "Enter malayalam word here", 334)}
        <div class="add">${fit("Add", 37)}</div>
      </div>`;
  }
}

/* ---------- hardware controls ---------- */
@customElement("phone-controls")
class PhoneControls extends LitElement {
  static styles = css`
    :host { display: flex; flex-direction: column; align-items: center; width: 413px; box-sizing: border-box; padding-top: 212px; background: #525252; font-family: "Open Sans", "Noto Sans", sans-serif; color: #1c1c1c; }
    .pad { display: grid; grid-template-columns: repeat(4, 38px); grid-template-rows: repeat(3, 38px); gap: 33px 18px; }
    .hb { width: 38px; height: 38px; border-radius: 50%; background: linear-gradient(#c2c2c2, #828282); box-shadow: inset 0 1px 1px #ddd, 0 0 0 1.500px #3e3e3e, 1.500px 2px 0 1px #757575; display: flex; align-items: center; justify-content: center; }
    .hb svg { margin-left: -1px; }
    .menu { font-size: 11px; font-weight: bold; line-height: 38px; color: #333; }
    .menu fit-text { padding-top: 1px; }
    .dp { grid-column: 2 / 4; justify-self: center; align-self: center; }
    .kb { margin-top: 71px; width: 372px; height: 182px; box-sizing: border-box; display: grid; grid-template-columns: repeat(10, 35px); grid-template-rows: repeat(5, 34px); gap: 2px; padding: 2px; background: #3c3c3c; box-shadow: 1px 1px 0 #757575; }
    .key { background: linear-gradient(#a2a2a2, #848484); box-shadow: inset 1px 1px 0 #b4b4b4; display: flex; justify-content: space-between; box-sizing: border-box; height: 34px; }
    .m { width: 24px; font-size: 20.500px; line-height: 28px; padding-top: 7px; height: 27px; display: flex; justify-content: center; text-shadow: 1px 1px 0 #a5a5a5; }
    .m span { transform: scaleX(.88); }
    .s { font-size: 18.500px; line-height: 22px; color: #f4f4f4; margin-right: 3px; text-shadow: 0 1px 1px #666; white-space: nowrap; }
    .s span { display: inline-block; transform: scaleX(.9); transform-origin: 100% 50%; }
    .alt { justify-content: center; font-weight: bold; font-size: 13px; line-height: 20px; padding: 12px 0 0 1px; }
    .light { color: #f4f4f4; }
    .mid { justify-content: center; align-items: center; padding-top: 3px; }
    .del { flex-direction: column; align-items: center; justify-content: center; font-weight: bold; font-size: 11.500px; line-height: 13px; }
    .del fit-text { margin: -2px 0 1px 2px; }
    .space { grid-column: span 4; display: grid; grid-template-columns: 1fr 22px 1fr; }
    .space .sp { grid-column: 2; margin-top: 23px; } .space .tb { justify-self: end; margin: 4px 5px 0 0; }
  `;
  key(k: Key) {
    if (k.k === "space") return html`<div class="key space"><div class="sp">${k.i}</div><div class="tb">${tabKey}</div></div>`;
    if (k.k === "del") return html`<div class="key del">${fit("DEL", 21)}${k.i}</div>`;
    if (k.i) return html`<div class="key mid">${k.i}</div>`;
    if (k.k) return html`<div class="key ${k.k}">${fit(k.m!, k.m === "SYM" ? 26 : 22)}</div>`;
    return html`<div class="key"><div class="m"><span>${k.m}</span></div>${k.s ? html`<div class="s"><span>${k.s}</span></div>` : nothing}</div>`;
  }
  render() {
    const b = (n: string) => html`<div class="hb">${hw[n]}</div>`;
    return html`
      <div class="pad">${b("cam")}${b("vol1")}${b("vol2")}${b("pow")}
        ${b("call")}<div class="dp">${dpad}</div>${b("end")}
        ${b("home")}<div class="hb menu">${fit("MENU", 32)}</div>${b("back")}${b("find")}</div>
      <div class="kb">${keys.map((k) => this.key(k))}</div>`;
  }
}

/* ---------- emulator window ---------- */
@customElement("emulator-window")
class EmulatorWindow extends LitElement {
  static styles = [pillCss, css`
    :host { display: block; width: 952px; height: 886px; box-sizing: border-box; border: 1px solid #8d7d62; border-top-color: #6a604f; border-radius: 7px 7px 5px 5px; overflow: hidden; background: #f0ebe3; }
    .title { height: 26px; box-sizing: border-box; display: flex; align-items: center; gap: 12px; padding: 1px 0 0 10px; background: linear-gradient(#56554f, #3c3b37 60%); font: bold 13.300px/18px "DejaVu Sans", sans-serif; color: #97948a; text-shadow: 0 -1px #22211f; }
    .client { display: flex; height: 854px; }
    .left { width: 534px; box-sizing: border-box; background: #6b6b6b; padding: 21px; }
    .frame { width: 480px; height: 800px; border: 6px solid #000; border-radius: 4px; box-shadow: 1px 1px 0 #9a9a9a, -1px -1px 0 #505050; }
    .div { width: 3px; box-sizing: border-box; background: #484848; border-right: 1px solid #7c7c7c; }
  `];
  render() {
    return html`<div class="title">${pill(2)}${fit("5554:phone11", 105)}</div>
      <div class="client"><div class="left"><div class="frame"><phone-screen></phone-screen></div></div><div class="div"></div><phone-controls></phone-controls></div>`;
  }
}

@customElement("app-root")
class AppRoot extends LitElement {
  static styles = css`
    :host { display: block; position: relative; width: 1400px; height: 1050px; overflow: hidden; background: #525252; }
    .desk { display: flex; }
    emulator-window { position: absolute; left: 99px; top: 73px; }
    .cursor { position: absolute; left: 861px; top: 665px; }
  `;
  render() {
    return html`<top-panel></top-panel>
      <div class="desk"><side-dock></side-dock><browser-window></browser-window></div>
      <emulator-window></emulator-window>
      <div class="cursor">${icon(14, 23, svg`<path d="M1.500 1.500V17.500L5.200 14.200L8 21L10.800 19.800L8 13.200H13Z" fill="#fff" stroke="#000" stroke-width="1.100"/>`)}</div>`;
  }
}
